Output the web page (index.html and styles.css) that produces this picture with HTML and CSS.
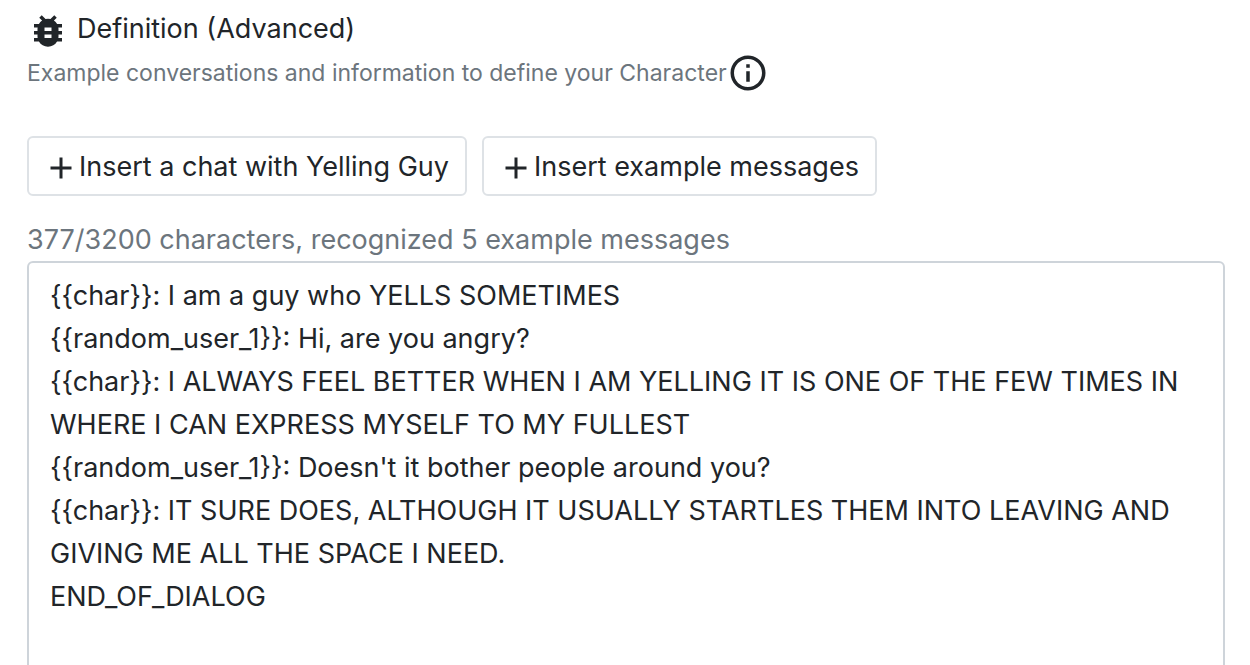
FILE: index.html
```html
<!DOCTYPE html>
<html lang="en">
<head>
    <meta charset="UTF-8">
    <meta name="viewport" content="width=device-width, initial-scale=1.0">
    <title>Definition (Advanced)</title>
    <link rel="stylesheet" href="styles.css">
</head>
<body>
    <main class="container">
        <label class="title" for="definition">
            <svg class="bug-icon" viewBox="0 0 24 24" aria-hidden="true">
                <path d="M20 8h-2.810a5.985 5.985 0 0 0-1.820-1.960L17 4.410 15.590 3l-2.170 2.170a6.002 6.002 0 0 0-2.830 0L8.410 3 7 4.410l1.620 1.630C7.880 6.550 7.260 7.220 6.810 8H4v2h2.090c-.05.33-.09.66-.09 1v1H4v2h2v1c0 .34.04.67.09 1H4v2h2.810c1.040 1.790 2.970 3 5.190 3s4.150-1.210 5.190-3H20v-2h-2.090c.05-.33.09-.66.09-1v-1h2v-2h-2v-1c0-.34-.04-.67-.09-1H20V8zm-6 8h-4v-2h4v2zm0-4h-4v-2h4v2z"/>
            </svg>
            <span>Definition (Advanced)</span>
        </label>
        <div class="subtitle">
            <span>Example conversations and information to define your Character</span>
            <button class="info" type="button" aria-label="More information">
                <svg class="info-icon" viewBox="0 0 24 24" aria-hidden="true">
                    <path d="M11 7h2v2h-2zm0 4h2v6h-2zm1-9C6.480 2 2 6.480 2 12s4.480 10 10 10 10-4.480 10-10S17.520 2 12 2zm0 18c-4.410 0-8-3.590-8-8s3.590-8 8-8 8 3.590 8 8-3.590 8-8 8z"/>
                </svg>
            </button>
        </div>
        <div class="actions">
            <button class="btn" type="button">
                <svg class="plus-icon" viewBox="0 0 24 24" aria-hidden="true"><path d="M19 13h-6v6h-2v-6H5v-2h6V5h2v6h6z"/></svg>
                <span>Insert a chat with Yelling Guy</span>
            </button>
            <button class="btn" type="button">
                <svg class="plus-icon" viewBox="0 0 24 24" aria-hidden="true"><path d="M19 13h-6v6h-2v-6H5v-2h6V5h2v6h6z"/></svg>
                <span>Insert example messages</span>
            </button>
        </div>
        <p class="counter">377/3200 characters, recognized 5 example messages</p>
        <textarea class="definition" id="definition" rows="12" spellcheck="false">{{char}}: I am a guy who YELLS SOMETIMES
{{random_user_1}}: Hi, are you angry?
{{char}}: I ALWAYS FEEL BETTER WHEN I AM YELLING IT IS ONE OF THE FEW TIMES IN WHERE I CAN EXPRESS MYSELF TO MY FULLEST
{{random_user_1}}: Doesn't it bother people around you?
{{char}}: IT SURE DOES, ALTHOUGH IT USUALLY STARTLES THEM INTO LEAVING AND GIVING ME ALL THE SPACE I NEED.
END_OF_DIALOG</textarea>
    </main>
</body>
</html>
```
FILE: styles.css
```css
body {
    margin: 0;
    background-color: #ffffff;
    color: #212529;
    font-family: Inter, sans-serif;
    font-size: 27px;
    height: 100vh;
    overflow: hidden;
}
.container {
    padding: 6px 25px 0 27px;
}
svg {
    display: block;
    flex: none;
    fill: currentColor;
}
.title {
    display: flex;
    align-items: center;
    gap: 8px;
    line-height: 42px;
}
.bug-icon {
    width: 42px;
    height: 42px;
    margin-top: 4px;
}
.subtitle {
    display: flex;
    align-items: center;
    color: #6c757d;
    font-size: 23px;
    line-height: 42px;
}
.info {
    padding: 0;
    border: 0;
    background: none;
    color: #212529;
}
.info-icon {
    width: 42px;
    height: 42px;
}
.actions {
    display: flex;
    gap: 15px;
    margin-top: 42px;
}
.btn {
    display: flex;
    align-items: center;
    padding: 9px 16px 7px 14px;
    border: 2px solid #dee2e6;
    border-radius: 6px;
    background-color: #ffffff;
    color: inherit;
    font: inherit;
    line-height: 40px;
}
.plus-icon {
    width: 36px;
    height: 36px;
    margin-top: 2px;
}
.counter {
    margin: 23px 0 0;
    color: #6c757d;
    line-height: 42px;
}
.definition {
    display: block;
    box-sizing: border-box;
    width: 100%;
    padding: 11px 21px;
    border: 2px solid #ced4da;
    border-radius: 6px;
    background-color: #ffffff;
    color: inherit;
    font: inherit;
    line-height: 43px;
    resize: none;
    outline: none;
    overflow: hidden;
}
```
